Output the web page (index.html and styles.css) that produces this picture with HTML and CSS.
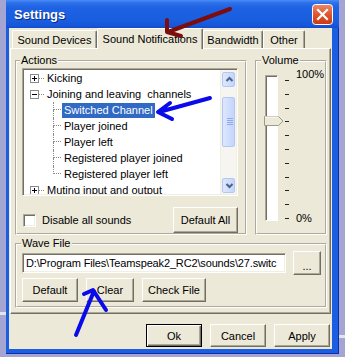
FILE: index.html
```html
<!DOCTYPE html>
<html lang="en">
<head>
<meta charset="UTF-8">
<meta name="viewport" content="width=device-width, initial-scale=1.0">
<title>Settings</title>
<link rel="stylesheet" href="styles.css">
</head>
<body>
    <div class="window">
        <div class="titlebar">
            <span class="title">Settings</span>
            <span class="close">
                <svg width="21" height="21" viewBox="0 0 21 21">
                    <defs>
                        <linearGradient id="closeBg" x1="0" y1="0" x2="0" y2="1">
                            <stop offset="0" stop-color="#ec8a6a"/>
                            <stop offset="0.5" stop-color="#e0552e"/>
                            <stop offset="1" stop-color="#c83a14"/>
                        </linearGradient>
                    </defs>
                    <rect x="0.5" y="0.5" width="20" height="20" rx="3" fill="url(#closeBg)" stroke="#fff"/>
                    <path d="M6 6 L15 15 M15 6 L6 15" stroke="#fff" stroke-width="2.2" stroke-linecap="square"/>
                </svg>
            </span>
        </div>
        <div class="client">
            <div class="tabs">
                <div class="tab tab-devices">Sound Devices</div>
                <div class="tab tab-active tab-notify">Sound Notifications</div>
                <div class="tab tab-bandwidth">Bandwidth</div>
                <div class="tab tab-other">Other</div>
            </div>
            <div class="panel">
                <div class="top-row">
                    <fieldset class="group actions">
                        <legend>Actions</legend>
                        <div class="tree">
                            <div class="tree-items">
                                <div class="node">
                                    <span class="expander"><svg width="9" height="9"><rect x="0.5" y="0.5" width="8" height="8" fill="#fff" stroke="#8a8a8a"/><path d="M2 4.5h5M4.5 2v5" stroke="#000"/></svg></span>
                                    <span class="hline"></span>
                                    <span class="label">Kicking</span>
                                </div>
                                <div class="node">
                                    <span class="expander"><svg width="9" height="9"><rect x="0.5" y="0.5" width="8" height="8" fill="#fff" stroke="#8a8a8a"/><path d="M2 4.5h5" stroke="#000"/></svg></span>
                                    <span class="hline"></span>
                                    <span class="label">Joining and leaving  channels</span>
                                </div>
                                <div class="node child">
                                    <span class="branch"><span class="arm"></span><span class="stem"></span></span>
                                    <span class="label selected">Switched Channel</span>
                                </div>
                                <div class="node child">
                                    <span class="branch"><span class="arm"></span><span class="stem"></span></span>
                                    <span class="label">Player joined</span>
                                </div>
                                <div class="node child">
                                    <span class="branch"><span class="arm"></span><span class="stem"></span></span>
                                    <span class="label">Player left</span>
                                </div>
                                <div class="node child">
                                    <span class="branch"><span class="arm"></span><span class="stem"></span></span>
                                    <span class="label">Registered player joined</span>
                                </div>
                                <div class="node child">
                                    <span class="branch"><span class="arm"></span><span class="stem last"></span></span>
                                    <span class="label">Registered player left</span>
                                </div>
                                <div class="node">
                                    <span class="expander"><svg width="9" height="9"><rect x="0.5" y="0.5" width="8" height="8" fill="#fff" stroke="#8a8a8a"/><path d="M2 4.5h5M4.5 2v5" stroke="#000"/></svg></span>
                                    <span class="hline"></span>
                                    <span class="label">Muting input and output</span>
                                </div>
                            </div>
                            <div class="scrollbar">
                                <span class="sb-btn"><svg width="13" height="13"><path d="M3.5 8 L6.5 5 L9.5 8" fill="none" stroke="#4d6185" stroke-width="2"/></svg></span>
                                <span class="sb-thumb"><svg width="13" height="48"><path d="M4 20.5h6M4 22.5h6M4 24.5h6M4 26.5h6" stroke="#8eaaf0"/></svg></span>
                                <span class="sb-btn sb-down"><svg width="13" height="13"><path d="M3.5 5 L6.5 8 L9.5 5" fill="none" stroke="#4d6185" stroke-width="2"/></svg></span>
                            </div>
                        </div>
                        <div class="actions-foot">
                            <label class="check"><span class="checkbox"></span>Disable all sounds</label>
                            <button class="btn btn-defall">Default All</button>
                        </div>
                    </fieldset>
                    <fieldset class="group volume">
                        <legend>Volume</legend>
                        <div class="slider">
                            <div class="track">
                                <svg class="thumb" width="20" height="10" viewBox="0 0 20 10">
                                    <path d="M0.5 0.5 H14.5 L19 5 L14.5 9.5 H0.5 Z" fill="#ece9d8" stroke="#9d9a8a"/>
                                    <path d="M1 1 H14.2" stroke="#fff"/>
                                </svg>
                            </div>
                            <div class="ticks">
                                <span></span><span></span><span></span><span></span><span></span><span></span>
                                <span></span><span></span><span></span><span></span><span></span>
                            </div>
                            <div class="marks">
                                <span>100%</span>
                                <span>0%</span>
                            </div>
                        </div>
                    </fieldset>
                </div>
                <fieldset class="group wave">
                    <legend>Wave File</legend>
                    <div class="wave-row">
                        <div class="field">D:\Program Files\Teamspeak2_RC2\sounds\27.switc</div>
                        <button class="btn btn-browse">...</button>
                    </div>
                    <div class="wave-buttons">
                        <button class="btn btn-w56">Default</button>
                        <button class="btn btn-w48">Clear</button>
                        <button class="btn btn-w64">Check File</button>
                    </div>
                </fieldset>
            </div>
            <div class="dialog-buttons">
                <button class="btn btn-dialog btn-ok">Ok</button>
                <button class="btn btn-dialog">Cancel</button>
                <button class="btn btn-dialog">Apply</button>
            </div>
        </div>
    </div>

    <!-- hand drawn arrows on top of the screenshot -->
    <svg class="annotations" width="345" height="357" viewBox="0 0 345 357">
        <path d="M230 9 L168 32 M167 20 L167 32 L181 36" fill="none" stroke="#7d0c0c" stroke-width="4" stroke-linecap="round" stroke-linejoin="round"/>
        <path d="M210 98 L159 112 M170 103 L158 112 L172 119" fill="none" stroke="#0a0aea" stroke-width="4" stroke-linecap="round" stroke-linejoin="round"/>
        <path d="M76 335 L94 291 M84 294 L93 290 L106 310" fill="none" stroke="#0a0aea" stroke-width="4" stroke-linecap="round" stroke-linejoin="round"/>
    </svg>
</body>
</html>
```

FILE: styles.css
```css
body {
    margin: 0;
    width: 345px;
    height: 357px;
    overflow: hidden;
    position: relative;
    font-family: "Liberation Sans", Arial, sans-serif;
    font-size: 11px;
    color: #000;
    background:
        linear-gradient(#e4e4ee, #e4e4ee) 0 312px / 6px 3px no-repeat,
        linear-gradient(#e4e4ee, #e4e4ee) 339px 335px / 6px 3px no-repeat,
        #a5a5d3;
}

.window {
    margin-left: 6px;
    width: 333px;
    height: 354px;
    box-sizing: border-box;
    padding: 0 7px 5px 3px;
    background: #1c5ee2;
    box-shadow: inset -1px -1px 0 #0a2ea8;
    display: flex;
    flex-direction: column;
}

.titlebar {
    height: 28px;
    margin: 0 -7px 0 -3px;
    padding: 0 6px 0 8px;
    display: flex;
    align-items: center;
    justify-content: space-between;
    background: linear-gradient(#4a8cf7 0, #2b6fe9 3px, #1e62e3 8px, #1a5ee0 20px, #1755d8 26px, #1249c8 28px);
}

.title {
    font-size: 13px;
    font-weight: bold;
    color: #fff;
    text-shadow: 1px 1px 0 #0b2a8c;
    margin-top: 1px;
}

.close {
    display: flex;
}

.client {
    flex: 1;
    background: #ece9d8;
    padding: 0 1px 2px 1px;
    display: flex;
    flex-direction: column;
}

/* tabs */
.tabs {
    height: 20px;
    padding-left: 2px;
    display: flex;
    align-items: flex-end;
}

.tab {
    height: 18px;
    box-sizing: border-box;
    display: flex;
    align-items: center;
    justify-content: center;
    border: 1px solid;
    border-color: #fff #716f64 transparent #fff;
    border-bottom: none;
    border-radius: 2px 2px 0 0;
    box-shadow: inset -1px 0 0 #aca899;
    white-space: nowrap;
}

.tab-devices { width: 85px; }
.tab-notify { width: 106px; }
.tab-bandwidth { width: 60px; }
.tab-other { width: 42px; }

.tab-active {
    height: 21px;
    margin-bottom: -1px;
    position: relative;
    z-index: 1;
    background: #ece9d8;
    padding-bottom: 1px;
}

.panel {
    height: 266px;
    box-sizing: border-box;
    padding: 5px 3px 5px 4px;
    border: 1px solid;
    border-color: #fff #716f64 #716f64 #fff;
    box-shadow: inset -1px -1px 0 #aca899;
}

.top-row {
    display: flex;
    gap: 8px;
}

/* group boxes */
.group {
    margin: 0;
    min-width: 0;
    box-sizing: border-box;
    border: 2px groove #fffef7;
}

.group legend {
    padding: 0 1px;
    line-height: 13px;
}

.actions {
    width: 232px;
    padding: 1px 7px 0 5px;
}

.actions legend {
    margin-left: -2px;
}

.tree {
    width: 216px;
    height: 128px;
    box-sizing: border-box;
    padding: 1px;
    display: flex;
    background: #fff;
    border: 1px solid;
    border-color: #aca899 #fff #fff #aca899;
    box-shadow: inset 1px 1px 0 #716f64, inset -1px -1px 0 #f1efe2;
}

.tree-items {
    flex: 1;
    min-width: 0;
    overflow: hidden;
}

.node {
    height: 16px;
    display: flex;
    align-items: center;
    padding-left: 6px;
    white-space: pre;
}

.expander {
    display: flex;
    width: 9px;
    height: 9px;
}

.hline {
    width: 5px;
    margin-right: 1px;
    border-top: 1px dotted #8a8a8a;
}

.node.child {
    padding-left: 29px;
}

.branch {
    width: 8px;
    height: 16px;
    display: flex;
    flex-direction: column;
}

.arm {
    height: 7px;
    border-left: 1px dotted #8a8a8a;
    border-bottom: 1px dotted #8a8a8a;
}

.stem {
    height: 8px;
    border-left: 1px dotted #8a8a8a;
}

.stem.last {
    border-left-color: transparent;
}

.label {
    padding: 0 2px;
    line-height: 15px;
}

.node.child .label {
    margin-left: 1px;
}

.label.selected {
    background: #316ac5;
    color: #fff;
}

.scrollbar {
    width: 16px;
    box-sizing: border-box;
    padding: 2px 1px 1px 1px;
    display: flex;
    flex-direction: column;
    background: #f6f5f0;
    border-left: 1px solid #efeee7;
}

.sb-btn,
.sb-thumb {
    display: flex;
    box-sizing: border-box;
    border: 1px solid #b3c7f3;
    border-radius: 2px;
    background: linear-gradient(90deg, #dde7fe, #c4d5fc);
}

.sb-btn {
    height: 15px;
}

.sb-thumb {
    height: 50px;
    margin-top: 10px;
}

.sb-down {
    margin-top: auto;
}

.actions-foot {
    margin-top: 11px;
    display: flex;
    align-items: center;
    justify-content: space-between;
}

.check {
    display: flex;
    align-items: center;
    padding-left: 1px;
}

.checkbox {
    width: 13px;
    height: 13px;
    box-sizing: border-box;
    margin-right: 6px;
    background: #fff;
    border: 1px solid;
    border-color: #aca899 #fff #fff #aca899;
    box-shadow: inset 1px 1px 0 #716f64, inset -1px -1px 0 #f1efe2;
}

/* buttons */
.btn {
    font: inherit;
    color: #000;
    padding: 0;
    height: 24px;
    box-sizing: border-box;
    background: #ece9d8;
    border: 1px solid;
    border-color: #fff #716f64 #716f64 #fff;
    box-shadow: inset -1px -1px 0 #aca899;
}

.btn-defall {
    width: 65px;
    height: 26px;
}

.btn-w56 { width: 56px; }
.btn-w48 { width: 48px; }
.btn-w64 { width: 64px; }

.btn-browse {
    width: 28px;
    margin-left: 7px;
    padding-top: 5px;
}

.btn-dialog {
    width: 56px;
    height: 23px;
}

.btn-ok {
    border-color: #000;
    box-shadow: inset 1px 1px 0 #fff, inset -1px -1px 0 #716f64, inset -2px -2px 0 #aca899;
}

/* volume */
.volume {
    width: 72px;
    padding: 1px 0 0 8px;
}

.volume legend {
    margin-left: -4px;
}

.slider {
    display: flex;
    align-items: flex-start;
}

.track {
    width: 13px;
    height: 146px;
    margin-top: 7px;
    box-sizing: border-box;
    position: relative;
    background: #fff;
    border: 1px solid;
    border-color: #aca899 #fff #fff #aca899;
    box-shadow: inset 1px 1px 0 #716f64;
}

.thumb {
    position: absolute;
    left: -2px;
    top: 40px;
}

.ticks {
    width: 4px;
    height: 139px;
    margin: 12px 0 0 7px;
    display: flex;
    flex-direction: column;
    justify-content: space-between;
}

.ticks span {
    height: 1px;
    background: #222;
}

.marks {
    height: 157px;
    margin-left: 7px;
    display: flex;
    flex-direction: column;
    justify-content: space-between;
    line-height: 13px;
}

/* wave file */
.wave {
    width: 312px;
    margin-top: 2px;
    padding: 1px 4px 4px 5px;
}

.wave legend {
    margin-left: -1px;
}

.wave-row {
    display: flex;
    align-items: flex-start;
}

.field {
    width: 264px;
    height: 20px;
    margin-top: 2px;
    box-sizing: border-box;
    padding: 0 3px;
    line-height: 18px;
    letter-spacing: -0.15px;
    white-space: nowrap;
    overflow: hidden;
    background: #fff;
    border: 1px solid;
    border-color: #aca899 #fff #fff #aca899;
    box-shadow: inset 1px 1px 0 #716f64, inset -1px -1px 0 #f1efe2;
}

.wave-buttons {
    margin-top: 3px;
    display: flex;
    gap: 8px;
}

.dialog-buttons {
    margin-top: 10px;
    padding-right: 1px;
    display: flex;
    justify-content: flex-end;
    gap: 8px;
}

.annotations {
    position: absolute;
    left: 0;
    top: 0;
    z-index: 2;
    pointer-events: none;
}
```
